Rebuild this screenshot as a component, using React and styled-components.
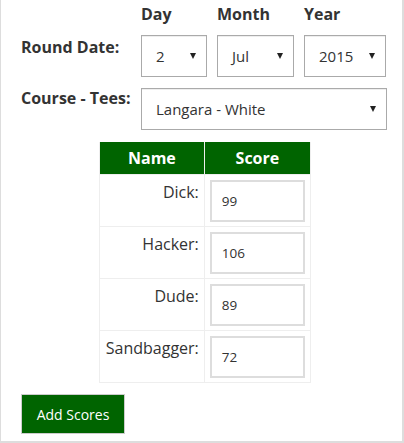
import React from 'react'
import styled, { createGlobalStyle } from 'styled-components'

const GlobalStyle = createGlobalStyle`
  html, body {
    margin: 0;
    padding: 0;
    background: #fff;
  }
  body {
    font-family: 'Open Sans', 'Liberation Sans', sans-serif;
    color: #333;
  }
`

const Panel = styled.div`
  box-sizing: border-box;
  width: 404px;
  height: 443px;
  border-left: 1px solid #ddd;
  border-right: 2px solid #ddd;
  border-bottom: 2px solid #ddd;
  padding: 4px 0 0 20px;
`

const DateGrid = styled.div`
  display: grid;
  grid-template-columns: 110px 66px 77px 82px;
  column-gap: 10px;
  align-items: start;
`

const ColHead = styled.div`
  font-size: 16px;
  font-weight: 700;
  line-height: 20px;
  height: 31px;
  color: #333;
`

const Label = styled.label`
  font-size: 16px;
  font-weight: 700;
  line-height: 20px;
  padding-top: 2px;
  color: #333;
`

const SelectBox = styled.div`
  box-sizing: border-box;
  position: relative;
  height: 42px;
  border: 1px solid #aaa;
  box-shadow: inset 0 1px 0 #eee;
  display: flex;
  align-items: center;
  padding-left: 14px;
  font-size: 15px;
  color: #333;
  background: #fff;
`

const Arrow = styled.span`
  position: absolute;
  right: 10px;
  top: 50%;
  margin-top: -3px;
  width: 0;
  height: 0;
  border-left: 3.5px solid transparent;
  border-right: 3.5px solid transparent;
  border-top: 6px solid #222;
`

const CourseRow = styled.div`
  display: grid;
  grid-template-columns: 120px 246px;
  margin-top: 11px;
  & > label { padding-top: 0; }
`

const ScoreTable = styled.table`
  border-collapse: collapse;
  margin: 12px 0 0 78px;
  width: 212px;
`

const Th = styled.th`
  background: #006400;
  color: #fff;
  font-size: 16px;
  font-weight: 700;
  height: 32px;
  padding: 0;
  border: 1px solid #eee;
  border-top: none;
  width: ${p => p.$w}px;
`

const Td = styled.td`
  border: 1px solid #eee;
  height: 51px;
  padding: 0;
  vertical-align: top;
`

const Name = styled.div`
  text-align: right;
  font-size: 16px;
  line-height: 20px;
  padding: 7px 5px 0 0;
  color: #333;
`

const ScoreInput = styled.div`
  box-sizing: border-box;
  margin: 5px 5px 0 5px;
  height: 42px;
  border: 2px solid #ddd;
  display: flex;
  align-items: center;
  padding: 0 0 0 10px;
  font-size: 13.5px;
  color: #333;
  background: #fff;
`

const Button = styled.button`
  margin-top: 11px;
  width: 104px;
  height: 40px;
  background: #006400;
  border: 1px solid #ccc;
  color: #fff;
  font-family: 'Open Sans', 'Liberation Sans', sans-serif;
  font-size: 14px;
  padding: 0;
  display: block;
`

const players = [
  { name: 'Dick', score: 99 },
  { name: 'Hacker', score: 106 },
  { name: 'Dude', score: 89 },
  { name: 'Sandbagger', score: 72 },
]

const Select = ({ value }) => (
  <SelectBox>
    {value}
    <Arrow />
  </SelectBox>
)

export default function App() {
  return (
    <Panel>
      <GlobalStyle />
      <DateGrid>
        <div />
        <ColHead>Day</ColHead>
        <ColHead>Month</ColHead>
        <ColHead>Year</ColHead>
        <Label>Round Date:</Label>
        <Select value="2" />
        <Select value="Jul" />
        <Select value="2015" />
      </DateGrid>
      <CourseRow>
        <Label>Course - Tees:</Label>
        <Select value="Langara - White" />
      </CourseRow>
      <ScoreTable>
        <thead>
          <tr>
            <Th $w={104}>Name</Th>
            <Th $w={107}>Score</Th>
          </tr>
        </thead>
        <tbody>
          {players.map(p => (
            <tr key={p.name}>
              <Td>
                <Name>{p.name}:</Name>
              </Td>
              <Td>
                <ScoreInput>{p.score}</ScoreInput>
              </Td>
            </tr>
          ))}
        </tbody>
      </ScoreTable>
      <Button>Add Scores</Button>
    </Panel>
  )
}
